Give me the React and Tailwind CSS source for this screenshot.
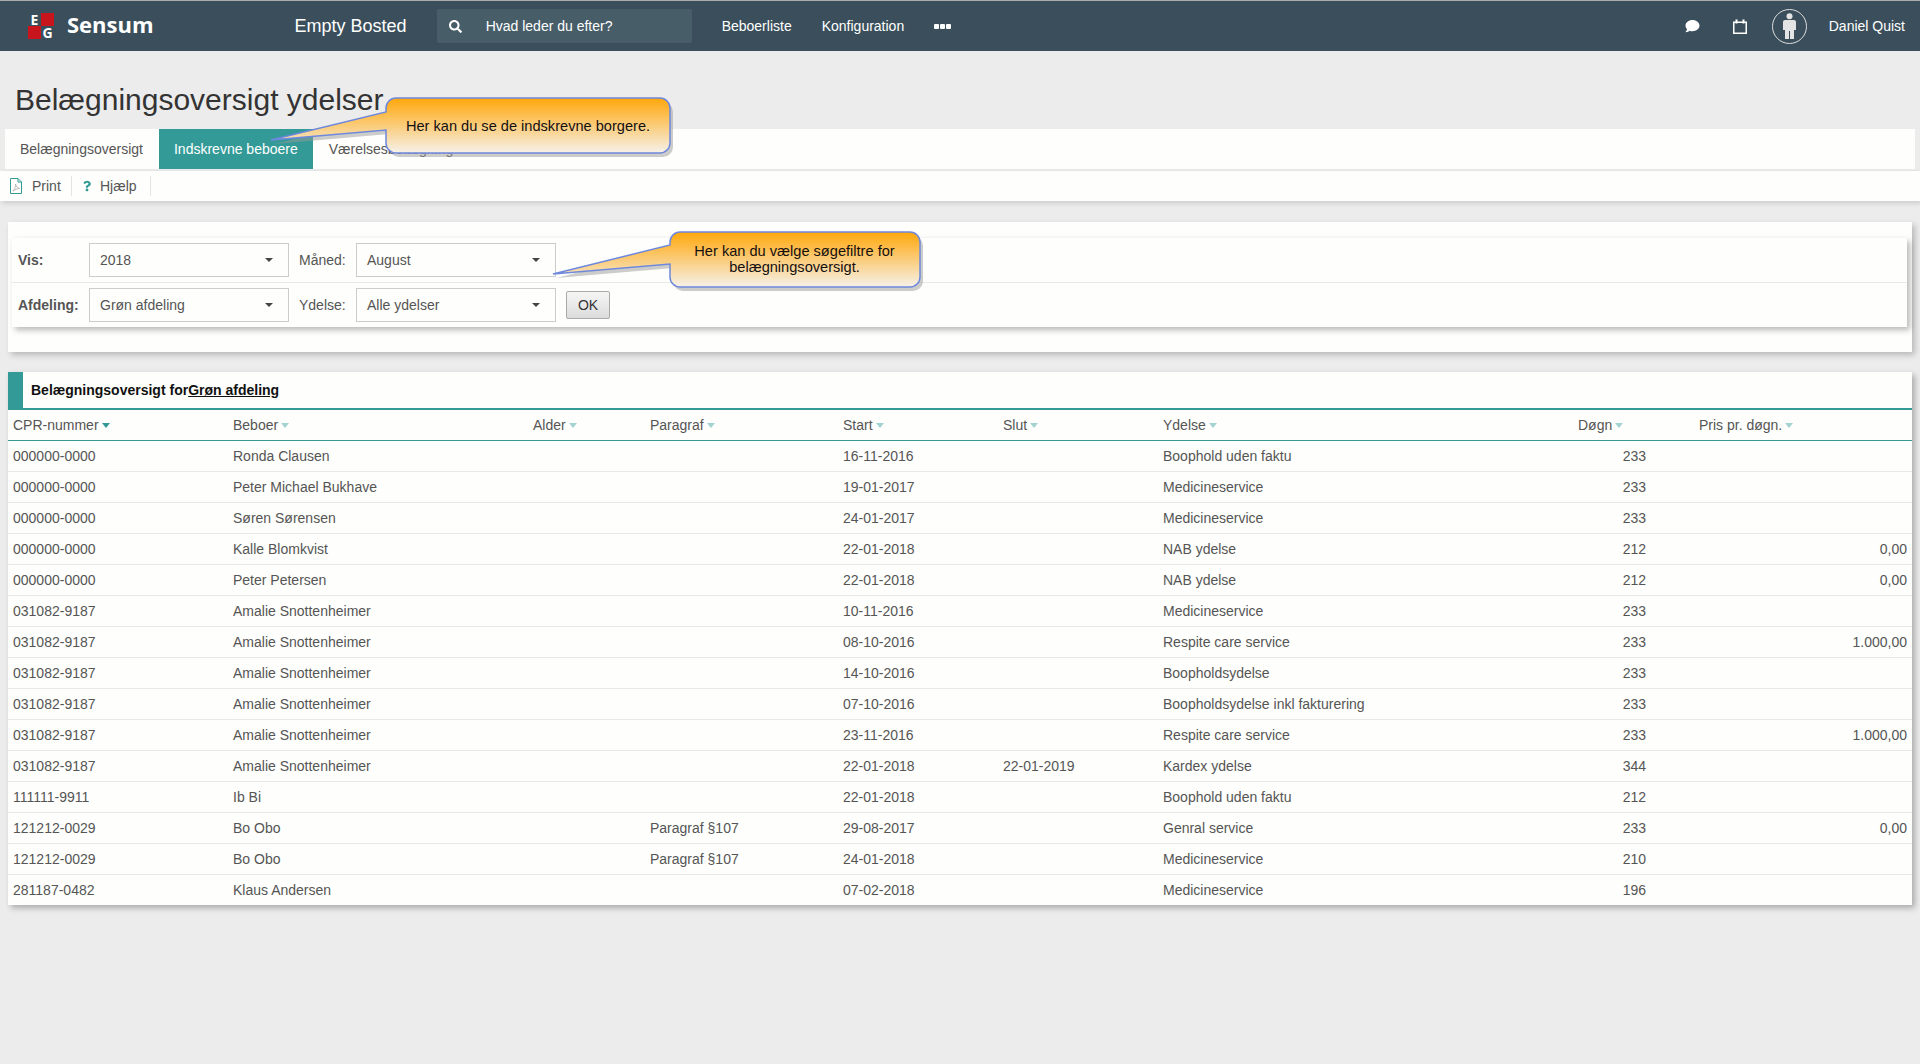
import React from "react";
import { FaSearch, FaComment, FaQuestion } from "react-icons/fa";

const rows = [
  ["000000-0000", "Ronda Clausen", "", "", "16-11-2016", "", "Boophold uden faktu", "233", ""],
  ["000000-0000", "Peter Michael Bukhave", "", "", "19-01-2017", "", "Medicineservice", "233", ""],
  ["000000-0000", "Søren Sørensen", "", "", "24-01-2017", "", "Medicineservice", "233", ""],
  ["000000-0000", "Kalle Blomkvist", "", "", "22-01-2018", "", "NAB ydelse", "212", "0,00"],
  ["000000-0000", "Peter Petersen", "", "", "22-01-2018", "", "NAB ydelse", "212", "0,00"],
  ["031082-9187", "Amalie Snottenheimer", "", "", "10-11-2016", "", "Medicineservice", "233", ""],
  ["031082-9187", "Amalie Snottenheimer", "", "", "08-10-2016", "", "Respite care service", "233", "1.000,00"],
  ["031082-9187", "Amalie Snottenheimer", "", "", "14-10-2016", "", "Boopholdsydelse", "233", ""],
  ["031082-9187", "Amalie Snottenheimer", "", "", "07-10-2016", "", "Boopholdsydelse inkl fakturering", "233", ""],
  ["031082-9187", "Amalie Snottenheimer", "", "", "23-11-2016", "", "Respite care service", "233", "1.000,00"],
  ["031082-9187", "Amalie Snottenheimer", "", "", "22-01-2018", "22-01-2019", "Kardex ydelse", "344", ""],
  ["111111-9911", "Ib Bi", "", "", "22-01-2018", "", "Boophold uden faktu", "212", ""],
  ["121212-0029", "Bo Obo", "", "Paragraf §107", "29-08-2017", "", "Genral service", "233", "0,00"],
  ["121212-0029", "Bo Obo", "", "Paragraf §107", "24-01-2018", "", "Medicineservice", "210", ""],
  ["281187-0482", "Klaus Andersen", "", "", "07-02-2018", "", "Medicineservice", "196", ""],
];

const headers = ["CPR-nummer", "Beboer", "Alder", "Paragraf", "Start", "Slut", "Ydelse", "Døgn", "Pris pr. døgn."];
const colWidths = ["w-[220px]", "w-[300px]", "w-[117px]", "w-[193px]", "w-[160px]", "w-[160px]", "w-[415px]", "w-[121px]", "w-[218px]"];

function Select({ value }) {
  return (
    <div className="flex h-[34px] w-[200px] items-center justify-between border border-[#ccc] bg-[#fefefc] pl-[10px] pr-[15px] text-[14px] text-[#555]">
      <span>{value}</span>
      <span className="border-x-[4px] border-t-[4px] border-x-transparent border-t-[#444]" />
    </div>
  );
}

function Caret({ active }) {
  return (
    <span
      className={
        "ml-[3px] inline-block border-x-[4.5px] border-t-[5px] border-x-transparent align-middle " +
        (active ? "border-t-[#339a98]" : "border-t-[#a3d3d0]")
      }
    />
  );
}

function Callout({ className, width, height, d, gradient, children, textClass }) {
  return (
    <div className={"absolute " + className}>
      <svg width={width} height={height} className="block overflow-visible">
        <defs>
          <linearGradient id={gradient} x1="0" y1="0" x2="0" y2="1">
            <stop offset="0" stopColor="#ffa70a" />
            <stop offset="1" stopColor="#f6f1ea" />
          </linearGradient>
        </defs>
        <path d={d} fill="#9a9a9a" fillOpacity="0.5" transform="translate(3 4)" />
        <path d={d} fill={`url(#${gradient})`} stroke="#6d88dc" strokeWidth="1.5" />
      </svg>
      <div className={"absolute text-center text-[14.6px] leading-[16px] text-[#151010] " + textClass}>{children}</div>
    </div>
  );
}

export default function App() {
  return (
    <div className="relative h-[1064px] overflow-hidden bg-[#ececec] font-['Liberation_Sans',Arial,sans-serif] text-[14px] text-[#555]">
      <header className="flex h-[51px] items-center border-t border-[#aaa] bg-[#3a4f5b] text-white">
        <div className="ml-[28px] grid h-[26px] w-[26px] grid-cols-2 grid-rows-2 font-['Open_Sans',sans-serif] text-[14px] leading-[13px] font-bold">
          <span className="text-center">E</span>
          <span className="bg-[#c8151d]" />
          <span className="bg-[#c8151d]" />
          <span className="text-center">G</span>
        </div>
        <span className="ml-[13px] pb-[4px] font-['Open_Sans',sans-serif] text-[22px] font-bold">Sensum</span>
        <span className="ml-[141px] text-[18px]">Empty Bosted</span>
        <div className="ml-[30px] flex h-[34px] w-[255px] items-center rounded-[2px] bg-[#475e69] pl-[12px]">
          <FaSearch className="h-[13px] w-[13px]" />
          <span className="ml-[24px]">Hvad leder du efter?</span>
        </div>
        <span className="ml-[30px]">Beboerliste</span>
        <span className="ml-[30px]">Konfiguration</span>
        <div className="ml-[30px] flex gap-[1px]">
          <span className="h-[5px] w-[5px] rounded-[1px] bg-white" />
          <span className="h-[5px] w-[5px] rounded-[1px] bg-white" />
          <span className="h-[5px] w-[5px] rounded-[1px] bg-white" />
        </div>
        <div className="ml-auto flex items-center">
          <FaComment className="h-[14px] w-[15px]" />
          <svg className="ml-[33px]" width="14" height="15" viewBox="0 0 14 15" fill="none" stroke="white">
            <rect x="0.75" y="3.25" width="12.5" height="11" strokeWidth="1.5" />
            <rect x="2.5" y="0.5" width="2" height="4" fill="white" stroke="none" />
            <rect x="9.5" y="0.5" width="2" height="4" fill="white" stroke="none" />
          </svg>
          <div className="ml-[25px] flex h-[35px] w-[35px] items-center justify-center rounded-full border border-[#ddd]">
            <svg width="13" height="26" viewBox="0 0 13 26" fill="#e4e4e4">
              <circle cx="6.5" cy="3.2" r="3" />
              <path d="M2 7h9a2 2 0 0 1 2 2v8h-2v9H7V18H6v8H2v-9H0V9a2 2 0 0 1 2-2z" />
            </svg>
          </div>
          <span className="ml-[22px] mr-[15px]">Daniel Quist</span>
        </div>
      </header>

      <div className="h-[78px] pl-[15px] pt-[32px]">
        <h1 className="text-[30px] leading-[34px] font-normal text-[#333]">Belægningsoversigt ydelser</h1>
      </div>

      <nav className="mx-[5px] flex h-[40px] items-stretch bg-[#fefefc]">
        <span className="flex items-center pl-[15px] pr-[16px]">Belægningsoversigt</span>
        <span className="flex items-center bg-[#339a98] px-[15px] text-white">Indskrevne beboere</span>
        <span className="flex items-center px-[16px]">Værelsesbelægning</span>
      </nav>

      <div className="mt-[2px] flex h-[30px] items-center bg-[#fefefc] shadow-[2px_2px_5px_rgba(0,0,0,0.15)]">
        <div className="flex h-[20px] w-[72px] items-center border-r border-[#e4e4e4] pl-[10px]">
          <svg width="12" height="16" viewBox="0 0 12 16" fill="none">
            <path d="M.5.5H8L11.5 4V15.5H.5z" stroke="#339a98" />
            <path d="M8 .5V4h3.5" stroke="#339a98" />
            <path d="M3 13c2-2 3-5 2.500-7 1 3 2 4 4 4.500-2 0-4 1-6.500 2.500z" stroke="#aaa" strokeWidth="0.8" />
          </svg>
          <span className="ml-[10px]">Print</span>
        </div>
        <div className="flex h-[20px] w-[79px] items-center border-r border-[#e4e4e4] pl-[11px]">
          <FaQuestion className="h-[12px] w-[8px] text-[#339a98]" />
          <span className="ml-[9px]">Hjælp</span>
        </div>
      </div>

      <section className="mx-[8px] mt-[21px] h-[130px] bg-[#fefefc] pl-[4px] pr-[5px] pt-[16px] shadow-[3px_3px_6px_rgba(0,0,0,0.22)]">
        <div className="shadow-[3px_3px_6px_rgba(0,0,0,0.28)]">
          <div className="flex h-[45px] items-center border-b border-[#e8e8e8] pl-[6px]">
            <span className="w-[71px] font-bold">Vis:</span>
            <Select value="2018" />
            <span className="w-[67px] pl-[10px]">Måned:</span>
            <Select value="August" />
          </div>
          <div className="flex h-[44px] items-center pl-[6px]">
            <span className="w-[71px] font-bold">Afdeling:</span>
            <Select value="Grøn afdeling" />
            <span className="w-[67px] pl-[10px]">Ydelse:</span>
            <Select value="Alle ydelser" />
            <button className="ml-[10px] h-[28px] w-[44px] rounded-[2px] border border-[#aaa] bg-gradient-to-b from-[#f6f6f6] to-[#dcdcdc] text-[#333]">OK</button>
          </div>
        </div>
      </section>

      <section className="mx-[8px] mt-[20px] bg-[#fefefc] shadow-[3px_3px_6px_rgba(0,0,0,0.28)]">
        <div className="flex h-[38px] border-b-2 border-[#339a98]">
          <div className="w-[15px] bg-[#339a98]" />
          <div className="flex items-center pl-[8px] font-bold text-[#111]">
            Belægningsoversigt for<span className="underline">Grøn afdeling</span>
          </div>
        </div>
        <table className="w-full table-fixed border-separate border-spacing-0">
          <colgroup>
            {colWidths.map((w, i) => (
              <col key={i} className={w} />
            ))}
          </colgroup>
          <thead>
            <tr className="h-[31px]">
              {headers.map((h, i) => (
                <th key={h} className="border-b border-[#339a98] pl-[5px] text-left font-normal">
                  {h}
                  <Caret active={i === 0} />
                </th>
              ))}
            </tr>
          </thead>
          <tbody>
            {rows.map((r, i) => (
              <tr key={i} className={i === rows.length - 1 ? "h-[30px]" : "h-[31px]"}>
                {r.map((c, j) => (
                  <td
                    key={j}
                    className={
                      (i === rows.length - 1 ? "" : "border-b border-[#e8e8e8] ") +
                      (j === 7 ? "pr-[48px] text-right" : j === 8 ? "pr-[5px] text-right" : "pl-[5px]")
                    }
                  >
                    {c}
                  </td>
                ))}
              </tr>
            ))}
          </tbody>
        </table>
      </section>

      <Callout
        className="left-[271px] top-[98px]"
        width={400}
        height={56}
        gradient="cg1"
        d="M125 0H389a10 10 0 0 1 10 10V45a10 10 0 0 1-10 10H125a10 10 0 0 1-10-10V32L0 42 115 14V10a10 10 0 0 1 10-10z"
        textClass="left-[114px] right-0 top-[20px]"
      >
        Her kan du se de indskrevne borgere.
      </Callout>
      <Callout
        className="left-[553px] top-[232px]"
        width={368}
        height={56}
        gradient="cg2"
        d="M127 0H357a10 10 0 0 1 10 10V45a10 10 0 0 1-10 10H127a10 10 0 0 1-10-10V32L0 42 117 13V10a10 10 0 0 1 10-10z"
        textClass="left-[115px] right-0 top-[11px]"
      >
        Her kan du vælge søgefiltre for
        <br />
        belægningsoversigt.
      </Callout>
    </div>
  );
}
